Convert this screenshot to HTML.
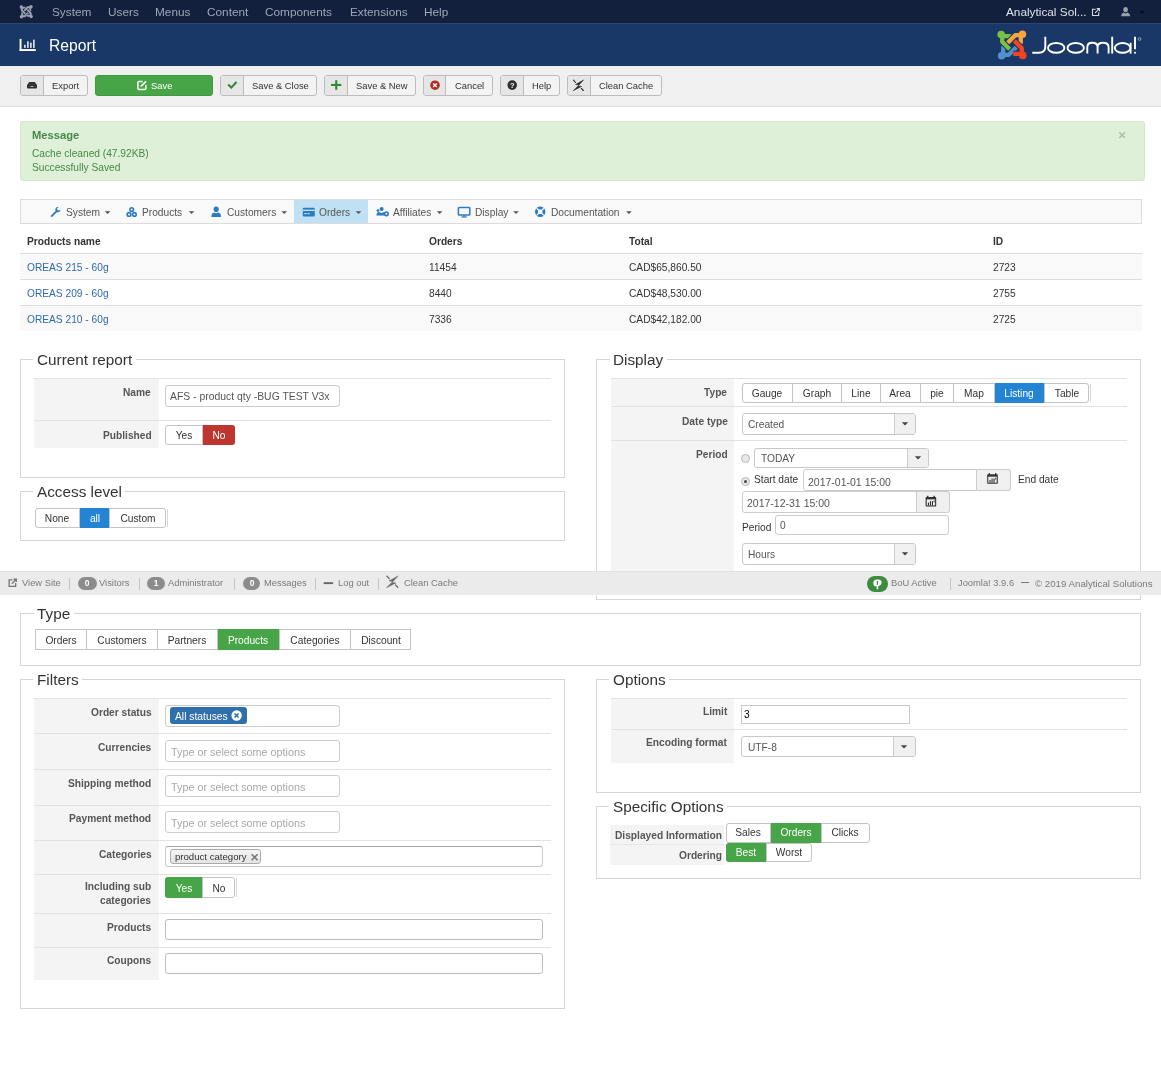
<!DOCTYPE html><html><head><meta charset="utf-8"><style>
*{box-sizing:border-box;margin:0;padding:0}
html,body{width:1161px;height:1080px;overflow:hidden;background:#fff}
body{position:relative;font-family:"Liberation Sans",sans-serif;font-size:10.2px;color:#333}
.a{position:absolute}
.t{position:absolute;white-space:nowrap;line-height:1.15;will-change:transform}
.b{font-weight:bold}
</style></head><body>
<div class="a" style="left:0px;top:0px;width:1161px;height:23px;background:#12203e"></div>
<div class="a" style="left:0px;top:23px;width:1161px;height:1px;background:#2b4672"></div>
<div class="t " style="left:51.7px;top:5.93px;font-size:11.8px;color:#9ea6b5">System</div>
<div class="t " style="left:107.7px;top:5.93px;font-size:11.8px;color:#9ea6b5">Users</div>
<div class="t " style="left:154.6px;top:5.93px;font-size:11.8px;color:#9ea6b5">Menus</div>
<div class="t " style="left:206.7px;top:5.93px;font-size:11.8px;color:#9ea6b5">Content</div>
<div class="t " style="left:265px;top:5.93px;font-size:11.8px;color:#9ea6b5">Components</div>
<div class="t " style="left:350px;top:5.93px;font-size:11.8px;color:#9ea6b5">Extensions</div>
<div class="t " style="left:424px;top:5.93px;font-size:11.8px;color:#9ea6b5">Help</div>
<div class="t " style="left:1006.2px;top:5.93px;font-size:11.8px;color:#dfe3ea">Analytical Sol...</div>
<div class="a" style="left:0px;top:24px;width:1161px;height:42px;background:#1a3867"></div>
<div class="t " style="left:49.4px;top:36.53px;font-size:15.7px;color:#fff">Report</div>
<div class="a" style="left:0px;top:66px;width:1161px;height:40px;background:#f0f0f0"></div>
<div class="a" style="left:0px;top:106px;width:1161px;height:1px;background:#dedede"></div>
<div class="a" style="left:20px;top:75px;width:68px;height:21px;border:1px solid #bcbcbc;border-radius:3px;background:#f3f3f3;overflow:hidden"><div class="a" style="left:0;top:0;bottom:0;width:22.5px;background:#e6e6e6;border-right:1px solid #bcbcbc"></div></div>
<div class="t " style="left:51.7px;top:80.84px;font-size:9.4px;color:#333">Export</div>
<div class="a" style="left:95px;top:75px;width:118px;height:21px;border:1px solid #3f9a3f;border-radius:3px;background:#47a447"></div>
<div class="t " style="left:150.7px;top:80.84px;font-size:9.4px;color:#fff">Save</div>
<div class="a" style="left:220px;top:75px;width:97px;height:21px;border:1px solid #bcbcbc;border-radius:3px;background:#f3f3f3;overflow:hidden"><div class="a" style="left:0;top:0;bottom:0;width:22.599999999999994px;background:#e6e6e6;border-right:1px solid #bcbcbc"></div></div>
<div class="t " style="left:251.7px;top:80.84px;font-size:9.4px;color:#333">Save &amp; Close</div>
<div class="a" style="left:324px;top:75px;width:92px;height:21px;border:1px solid #bcbcbc;border-radius:3px;background:#f3f3f3;overflow:hidden"><div class="a" style="left:0;top:0;bottom:0;width:22.600000000000023px;background:#e6e6e6;border-right:1px solid #bcbcbc"></div></div>
<div class="t " style="left:355.9px;top:80.84px;font-size:9.4px;color:#333">Save &amp; New</div>
<div class="a" style="left:423px;top:75px;width:70px;height:21px;border:1px solid #bcbcbc;border-radius:3px;background:#f3f3f3;overflow:hidden"><div class="a" style="left:0;top:0;bottom:0;width:22.399999999999977px;background:#e6e6e6;border-right:1px solid #bcbcbc"></div></div>
<div class="t " style="left:454.7px;top:80.84px;font-size:9.4px;color:#333">Cancel</div>
<div class="a" style="left:500px;top:75px;width:60px;height:21px;border:1px solid #bcbcbc;border-radius:3px;background:#f3f3f3;overflow:hidden"><div class="a" style="left:0;top:0;bottom:0;width:23px;background:#e6e6e6;border-right:1px solid #bcbcbc"></div></div>
<div class="t " style="left:531.5px;top:80.84px;font-size:9.4px;color:#333">Help</div>
<div class="a" style="left:567px;top:75px;width:94.5px;height:21px;border:1px solid #bcbcbc;border-radius:3px;background:#f3f3f3;overflow:hidden"><div class="a" style="left:0;top:0;bottom:0;width:22.700000000000045px;background:#e6e6e6;border-right:1px solid #bcbcbc"></div></div>
<div class="t " style="left:598.7px;top:80.84px;font-size:9.4px;color:#333">Clean Cache</div>
<div class="a" style="left:20px;top:121px;width:1125px;height:60px;background:#dff0d8;border:1px solid #d3e8c8;border-radius:3px"></div>
<div class="t " style="left:32.1px;top:129.08px;font-size:11.2px;color:#468847;font-weight:bold">Message</div>
<div class="t " style="left:32.1px;top:148.10px;font-size:10.2px;color:#468847">Cache cleaned (47.92KB)</div>
<div class="t " style="left:32.1px;top:161.90px;font-size:10.2px;color:#468847">Successfully Saved</div>
<div class="a" style="left:20px;top:199px;width:1122px;height:25px;background:#f9f9f9;border:1px solid #dcdcdc"></div>
<div class="a" style="left:294px;top:200px;width:74px;height:23px;background:#c0e0f3"></div>
<div class="t " style="left:65.5px;top:207.10px;font-size:10.2px;color:#555">System</div>
<div class="t " style="left:142.2px;top:207.10px;font-size:10.2px;color:#555">Products</div>
<div class="t " style="left:226.6px;top:207.10px;font-size:10.2px;color:#555">Customers</div>
<div class="t " style="left:319.3px;top:207.10px;font-size:10.2px;color:#555">Orders</div>
<div class="t " style="left:392.9px;top:207.10px;font-size:10.2px;color:#555">Affiliates</div>
<div class="t " style="left:474.5px;top:207.10px;font-size:10.2px;color:#555">Display</div>
<div class="t " style="left:551px;top:207.10px;font-size:10.2px;color:#555">Documentation</div>
<div class="a" style="left:20px;top:253px;width:1122px;height:1px;background:#ddd"></div>
<div class="a" style="left:20px;top:254px;width:1122px;height:25px;background:#f9f9f9"></div>
<div class="a" style="left:20px;top:279px;width:1122px;height:1px;background:#ddd"></div>
<div class="a" style="left:20px;top:305px;width:1122px;height:1px;background:#ddd"></div>
<div class="a" style="left:20px;top:306px;width:1122px;height:25px;background:#f9f9f9"></div>
<div class="t " style="left:26.5px;top:235.90px;font-size:10.2px;font-weight:bold">Products name</div>
<div class="t " style="left:428.9px;top:235.90px;font-size:10.2px;font-weight:bold">Orders</div>
<div class="t " style="left:628.5px;top:235.90px;font-size:10.2px;font-weight:bold">Total</div>
<div class="t " style="left:993px;top:235.90px;font-size:10.2px;font-weight:bold">ID</div>
<div class="t " style="left:26.5px;top:261.80px;font-size:10.2px;color:#2f6aac">OREAS 215 - 60g</div>
<div class="t " style="left:428.9px;top:261.80px;font-size:10.2px;">11454</div>
<div class="t " style="left:628.5px;top:261.80px;font-size:10.2px;">CAD$65,860.50</div>
<div class="t " style="left:993px;top:261.80px;font-size:10.2px;">2723</div>
<div class="t " style="left:26.5px;top:287.80px;font-size:10.2px;color:#2f6aac">OREAS 209 - 60g</div>
<div class="t " style="left:428.9px;top:287.80px;font-size:10.2px;">8440</div>
<div class="t " style="left:628.5px;top:287.80px;font-size:10.2px;">CAD$48,530.00</div>
<div class="t " style="left:993px;top:287.80px;font-size:10.2px;">2755</div>
<div class="t " style="left:26.5px;top:313.80px;font-size:10.2px;color:#2f6aac">OREAS 210 - 60g</div>
<div class="t " style="left:428.9px;top:313.80px;font-size:10.2px;">7336</div>
<div class="t " style="left:628.5px;top:313.80px;font-size:10.2px;">CAD$42,182.00</div>
<div class="t " style="left:993px;top:313.80px;font-size:10.2px;">2725</div>
<div class="a" style="left:20px;top:359px;width:545px;height:119px;border:1px solid #d5d5d5"></div>
<div class="a" style="left:33.4px;top:358px;width:102.22815625000001px;height:3px;background:#fff"></div>
<div class="t " style="left:36.9px;top:351.10px;font-size:15.3px;color:#333">Current report</div>
<div class="a" style="left:34px;top:378px;width:125px;height:70px;background:#f4f4f4"></div>
<div class="a" style="left:34px;top:378px;width:517px;height:1px;background:#e2e2e2"></div>
<div class="a" style="left:34px;top:420px;width:517px;height:1px;background:#e2e2e2"></div>
<div class="t" style="right:1009.8px;top:387.10px;font-size:10.2px;font-weight:bold;color:#555">Name</div>
<div class="t" style="right:1009.8px;top:429.50px;font-size:10.2px;font-weight:bold;color:#555">Published</div>
<div class="a" style="left:165px;top:385px;width:175px;height:22px;border:1px solid #ccc;border-radius:3px;background:#fff;"></div>
<div class="t " style="left:170px;top:391.12px;font-size:10.4px;color:#555">AFS - product qty -BUG TEST V3x</div>
<div class="a" style="left:165px;top:425px;width:70px;height:20px;border:1px solid #c4c4c4;border-radius:3px;background:#fff;overflow:hidden"></div>
<div class="t" style="left:83.6px;width:200px;text-align:center;top:429.50px;font-size:10.2px;color:#333">Yes</div>
<div class="a" style="left:202.2px;top:425px;width:32.80000000000001px;height:20px;background:#bd362f;border-radius:0 3px 3px 0"></div>
<div class="t" style="left:118.6px;width:200px;text-align:center;top:429.50px;font-size:10.2px;color:#fff">No</div>
<div class="a" style="left:201.7px;top:425px;width:1.0px;height:20px;background:#c4c4c4"></div>
<div class="a" style="left:20px;top:491px;width:545px;height:50px;border:1px solid #d5d5d5"></div>
<div class="a" style="left:33.4px;top:490px;width:92.02975px;height:3px;background:#fff"></div>
<div class="t " style="left:36.9px;top:482.80px;font-size:15.3px;color:#333">Access level</div>
<div class="a" style="left:35px;top:508px;width:130.5px;height:20px;border:1px solid #c4c4c4;border-radius:3px;background:#fff;overflow:hidden"></div>
<div class="t" style="left:-42.65px;width:200px;text-align:center;top:513.00px;font-size:10.2px;color:#333">None</div>
<div class="a" style="left:79.7px;top:508px;width:30.099999999999994px;height:20px;background:#2384d3"></div>
<div class="t" style="left:-5.25px;width:200px;text-align:center;top:513.00px;font-size:10.2px;color:#fff">all</div>
<div class="a" style="left:79.2px;top:508px;width:1.0px;height:20px;background:#c4c4c4"></div>
<div class="t" style="left:37.650000000000006px;width:200px;text-align:center;top:513.00px;font-size:10.2px;color:#333">Custom</div>
<div class="a" style="left:109.3px;top:508px;width:1.0px;height:20px;background:#c4c4c4"></div>
<div class="a" style="left:166.5px;top:509px;width:1.0px;height:18px;background:#d8d8d8"></div>
<div class="a" style="left:596px;top:359px;width:545px;height:241px;border:1px solid #d5d5d5"></div>
<div class="a" style="left:609.7px;top:358px;width:57.16487500000005px;height:3px;background:#fff"></div>
<div class="t " style="left:613.2px;top:351.10px;font-size:15.3px;color:#333">Display</div>
<div class="a" style="left:611px;top:378px;width:123.29999999999995px;height:212px;background:#f4f4f4"></div>
<div class="a" style="left:611px;top:378px;width:516px;height:1px;background:#e2e2e2"></div>
<div class="a" style="left:611px;top:406px;width:516px;height:1px;background:#e2e2e2"></div>
<div class="a" style="left:611px;top:440px;width:516px;height:1px;background:#e2e2e2"></div>
<div class="t" style="right:433.5px;top:386.90px;font-size:10.2px;font-weight:bold;color:#555">Type</div>
<div class="t" style="right:433.5px;top:415.50px;font-size:10.2px;font-weight:bold;color:#555">Date type</div>
<div class="t" style="right:433.5px;top:449.00px;font-size:10.2px;font-weight:bold;color:#555">Period</div>
<div class="a" style="left:742px;top:383px;width:346.5px;height:20px;border:1px solid #c4c4c4;border-radius:3px;background:#fff;overflow:hidden"></div>
<div class="t" style="left:667.3px;width:200px;text-align:center;top:388.00px;font-size:10.2px;color:#333">Gauge</div>
<div class="t" style="left:716.85px;width:200px;text-align:center;top:388.00px;font-size:10.2px;color:#333">Graph</div>
<div class="a" style="left:792.1px;top:383px;width:1.0px;height:20px;background:#c4c4c4"></div>
<div class="t" style="left:760.6px;width:200px;text-align:center;top:388.00px;font-size:10.2px;color:#333">Line</div>
<div class="a" style="left:840.6px;top:383px;width:1.0px;height:20px;background:#c4c4c4"></div>
<div class="t" style="left:800.4000000000001px;width:200px;text-align:center;top:388.00px;font-size:10.2px;color:#333">Area</div>
<div class="a" style="left:879.6px;top:383px;width:1.0px;height:20px;background:#c4c4c4"></div>
<div class="t" style="left:837.1500000000001px;width:200px;text-align:center;top:388.00px;font-size:10.2px;color:#333">pie</div>
<div class="a" style="left:920.2px;top:383px;width:1.0px;height:20px;background:#c4c4c4"></div>
<div class="t" style="left:873.85px;width:200px;text-align:center;top:388.00px;font-size:10.2px;color:#333">Map</div>
<div class="a" style="left:953.1px;top:383px;width:1.0px;height:20px;background:#c4c4c4"></div>
<div class="a" style="left:994.1px;top:383px;width:50.69999999999993px;height:20px;background:#2384d3"></div>
<div class="t" style="left:919.45px;width:200px;text-align:center;top:388.00px;font-size:10.2px;color:#fff">Listing</div>
<div class="a" style="left:993.6px;top:383px;width:1.0px;height:20px;background:#c4c4c4"></div>
<div class="t" style="left:966.6500000000001px;width:200px;text-align:center;top:388.00px;font-size:10.2px;color:#333">Table</div>
<div class="a" style="left:1044.3px;top:383px;width:1.0px;height:20px;background:#c4c4c4"></div>
<div class="a" style="left:1089.5px;top:384px;width:1.0px;height:18px;background:#d8d8d8"></div>
<div class="a" style="left:742px;top:413px;width:173.5px;height:22px;border:1px solid #c8c8c8;border-radius:3px;background:#fff;overflow:hidden"><div class="a" style="left:150.5px;top:0;right:0;bottom:0;background:#f0f0f0;border-left:1px solid #ccc"></div></div>
<svg class="a" style="left:900.5px;top:421.0px" width="8" height="6"><path d="M0.8 1.2 H7.2 L4 4.6 Z" fill="#444"/></svg>
<div class="t " style="left:748px;top:419.00px;font-size:10.2px;color:#555">Created</div>
<div class="a" style="left:741px;top:454px;width:9px;height:9px;border:1px solid #b5b5b5;border-radius:50%;background:#e8e8e8"></div>
<div class="a" style="left:754px;top:448px;width:174.5px;height:20px;border:1px solid #c8c8c8;border-radius:3px;background:#fff;overflow:hidden"><div class="a" style="left:151.60000000000002px;top:0;right:0;bottom:0;background:#f0f0f0;border-left:1px solid #ccc"></div></div>
<svg class="a" style="left:913.55px;top:455.0px" width="8" height="6"><path d="M0.8 1.2 H7.2 L4 4.6 Z" fill="#444"/></svg>
<div class="t " style="left:761px;top:453.20px;font-size:10.2px;color:#555">TODAY</div>
<div class="a" style="left:741px;top:476.5px;width:9px;height:9px;border:1px solid #b5b5b5;border-radius:50%;background:#e8e8e8"><div class="a" style="left:2px;top:2px;width:3px;height:3px;border-radius:50%;background:#444"></div></div>
<div class="t " style="left:754px;top:474.30px;font-size:10.2px;color:#333">Start date</div>
<div class="a" style="left:802.6px;top:469px;width:208.10000000000002px;height:21.5px;border:1px solid #ccc;border-radius:3px;background:#fff;"></div>
<div class="a" style="left:976.4px;top:469px;width:34.30000000000007px;height:21.5px;background:#f0f0f0;border:1px solid #ccc;border-radius:0 3px 3px 0"></div>
<div class="t " style="left:807.8px;top:475.62px;font-size:10.5px;color:#555">2017-01-01 15:00</div>
<div class="t " style="left:1018px;top:474.30px;font-size:10.2px;color:#333">End date</div>
<div class="a" style="left:741.6px;top:491.2px;width:208.0px;height:21.80000000000001px;border:1px solid #ccc;border-radius:3px;background:#fff;"></div>
<div class="a" style="left:915.5px;top:491.2px;width:34.10000000000002px;height:21.80000000000001px;background:#f0f0f0;border:1px solid #ccc;border-radius:0 3px 3px 0"></div>
<div class="t " style="left:746.8px;top:497.32px;font-size:10.5px;color:#555">2017-12-31 15:00</div>
<div class="t " style="left:741.6px;top:522.40px;font-size:10.2px;color:#333">Period</div>
<div class="a" style="left:774.7px;top:514.6px;width:174.79999999999995px;height:20.899999999999977px;border:1px solid #ccc;border-radius:3px;background:#fff;"></div>
<div class="t " style="left:780px;top:520.30px;font-size:10.2px;color:#555">0</div>
<div class="a" style="left:741.6px;top:542.5px;width:174.89999999999998px;height:22.100000000000023px;border:1px solid #c8c8c8;border-radius:3px;background:#fff;overflow:hidden"><div class="a" style="left:151.39999999999998px;top:0;right:0;bottom:0;background:#f0f0f0;border-left:1px solid #ccc"></div></div>
<svg class="a" style="left:901.25px;top:550.55px" width="8" height="6"><path d="M0.8 1.2 H7.2 L4 4.6 Z" fill="#444"/></svg>
<div class="t " style="left:748px;top:549.30px;font-size:10.2px;color:#555">Hours</div>
<div class="a" style="left:0px;top:571px;width:1161px;height:24px;background:#ebebeb;border-top:1px solid #e2e2e2"></div>
<div class="t " style="left:21.5px;top:578.08px;font-size:9.35px;color:#7a7a7a">View Site</div>
<div class="a" style="left:69px;top:577.8px;width:1px;height:12.0px;background:#c4c4c4"></div>
<div class="a" style="left:77.5px;top:576.5px;width:19.299999999999997px;height:13.3px;border-radius:7px;background:#8c8c8c"></div>
<div class="t" style="left:-12.849999999999994px;width:200px;text-align:center;top:579.07px;font-size:8.5px;color:#fff;font-weight:bold">0</div>
<div class="t " style="left:99px;top:578.08px;font-size:9.35px;color:#7a7a7a">Visitors</div>
<div class="a" style="left:138.5px;top:577.8px;width:1.0px;height:12.0px;background:#c4c4c4"></div>
<div class="a" style="left:147.3px;top:576.5px;width:18.099999999999994px;height:13.3px;border-radius:7px;background:#8c8c8c"></div>
<div class="t" style="left:56.35000000000002px;width:200px;text-align:center;top:579.07px;font-size:8.5px;color:#fff;font-weight:bold">1</div>
<div class="t " style="left:168px;top:578.08px;font-size:9.35px;color:#7a7a7a">Administrator</div>
<div class="a" style="left:233.5px;top:577.8px;width:1.0px;height:12.0px;background:#c4c4c4"></div>
<div class="a" style="left:242.7px;top:576.5px;width:17.600000000000023px;height:13.3px;border-radius:7px;background:#8c8c8c"></div>
<div class="t" style="left:151.5px;width:200px;text-align:center;top:579.07px;font-size:8.5px;color:#fff;font-weight:bold">0</div>
<div class="t " style="left:263.9px;top:578.08px;font-size:9.35px;color:#7a7a7a">Messages</div>
<div class="a" style="left:315px;top:577.8px;width:1px;height:12.0px;background:#c4c4c4"></div>
<div class="t " style="left:337.5px;top:578.08px;font-size:9.35px;color:#7a7a7a">Log out</div>
<div class="a" style="left:377.5px;top:577.8px;width:1.0px;height:12.0px;background:#c4c4c4"></div>
<div class="t " style="left:403.8px;top:578.08px;font-size:9.35px;color:#7a7a7a">Clean Cache</div>
<div class="a" style="left:867.4px;top:576px;width:20.6px;height:15.6px;border-radius:8px;background:#3d8b3d"></div>
<div class="t " style="left:890.7px;top:578.08px;font-size:9.35px;color:#7a7a7a">BoU Active</div>
<div class="a" style="left:949.5px;top:577.8px;width:1.0px;height:12.0px;background:#c4c4c4"></div>
<div class="t " style="left:958px;top:578.08px;font-size:9.35px;color:#7a7a7a">Joomla! 3.9.6</div>
<div class="a" style="left:1021.4px;top:582.3px;width:7.300000000000068px;height:1.0px;background:#7a7a7a"></div>
<div class="t " style="left:1035.4px;top:577.76px;font-size:9.7px;color:#7a7a7a">&copy; 2019 Analytical Solutions</div>
<div class="a" style="left:20px;top:613px;width:1121px;height:53px;border:1px solid #d5d5d5"></div>
<div class="a" style="left:33.6px;top:612px;width:40.16753125px;height:3px;background:#fff"></div>
<div class="t " style="left:37.1px;top:604.90px;font-size:15.3px;color:#333">Type</div>
<div class="a" style="left:35px;top:629px;width:376px;height:21px;border:1px solid #c4c4c4;background:#fff"></div>
<div class="t" style="left:-39.349999999999994px;width:200px;text-align:center;top:635.10px;font-size:10.2px;color:#333">Orders</div>
<div class="t" style="left:22.150000000000006px;width:200px;text-align:center;top:635.10px;font-size:10.2px;color:#333">Customers</div>
<div class="a" style="left:86.2px;top:629px;width:1.0px;height:21px;background:#c4c4c4"></div>
<div class="t" style="left:87.30000000000001px;width:200px;text-align:center;top:635.10px;font-size:10.2px;color:#333">Partners</div>
<div class="a" style="left:157.1px;top:629px;width:1.0px;height:21px;background:#c4c4c4"></div>
<div class="a" style="left:217px;top:629px;width:62.5px;height:21px;background:#47a447"></div>
<div class="t" style="left:148.25px;width:200px;text-align:center;top:635.10px;font-size:10.2px;color:#fff">Products</div>
<div class="a" style="left:216.5px;top:629px;width:1.0px;height:21px;background:#c4c4c4"></div>
<div class="t" style="left:214.75px;width:200px;text-align:center;top:635.10px;font-size:10.2px;color:#333">Categories</div>
<div class="a" style="left:279.0px;top:629px;width:1.0px;height:21px;background:#c4c4c4"></div>
<div class="t" style="left:280.5px;width:200px;text-align:center;top:635.10px;font-size:10.2px;color:#333">Discount</div>
<div class="a" style="left:349.5px;top:629px;width:1.0px;height:21px;background:#c4c4c4"></div>
<div class="a" style="left:20px;top:679px;width:545px;height:330px;border:1px solid #d5d5d5"></div>
<div class="a" style="left:33.4px;top:678px;width:48.647078125px;height:3px;background:#fff"></div>
<div class="t " style="left:36.9px;top:671.30px;font-size:15.3px;color:#333">Filters</div>
<div class="a" style="left:34px;top:698px;width:125px;height:282px;background:#f4f4f4"></div>
<div class="a" style="left:34px;top:698.2px;width:517px;height:1.0px;background:#e2e2e2"></div>
<div class="a" style="left:34px;top:732.8px;width:517px;height:1.0px;background:#e2e2e2"></div>
<div class="a" style="left:34px;top:768.9px;width:517px;height:1.0px;background:#e2e2e2"></div>
<div class="a" style="left:34px;top:804.5px;width:517px;height:1.0px;background:#e2e2e2"></div>
<div class="a" style="left:34px;top:840.2px;width:517px;height:1.0px;background:#e2e2e2"></div>
<div class="a" style="left:34px;top:873.7px;width:517px;height:1.0px;background:#e2e2e2"></div>
<div class="a" style="left:34px;top:913.2px;width:517px;height:1.0px;background:#e2e2e2"></div>
<div class="a" style="left:34px;top:946.5px;width:517px;height:1.0px;background:#e2e2e2"></div>
<div class="t" style="right:1009.8px;top:707.00px;font-size:10.2px;font-weight:bold;color:#555">Order status</div>
<div class="t" style="right:1009.8px;top:741.60px;font-size:10.2px;font-weight:bold;color:#555">Currencies</div>
<div class="t" style="right:1009.8px;top:777.70px;font-size:10.2px;font-weight:bold;color:#555">Shipping method</div>
<div class="t" style="right:1009.8px;top:813.30px;font-size:10.2px;font-weight:bold;color:#555">Payment method</div>
<div class="t" style="right:1009.8px;top:849.00px;font-size:10.2px;font-weight:bold;color:#555">Categories</div>
<div class="t" style="right:1009.8px;top:881.20px;font-size:10.2px;font-weight:bold;color:#555">Including sub</div>
<div class="t" style="right:1009.8px;top:922.00px;font-size:10.2px;font-weight:bold;color:#555">Products</div>
<div class="t" style="right:1009.8px;top:955.30px;font-size:10.2px;font-weight:bold;color:#555">Coupons</div>
<div class="t" style="right:1009.8px;top:895.20px;font-size:10.2px;font-weight:bold;color:#555">categories</div>
<div class="a" style="left:165.4px;top:704.6px;width:174.29999999999998px;height:22.699999999999932px;border:1px solid #ccc;border-radius:3px;background:#fff;"></div>
<div class="a" style="left:170.1px;top:707.4px;width:77.1px;height:16.300000000000068px;background:#2f6fab;border-radius:3px"></div>
<div class="t " style="left:175.2px;top:711.21px;font-size:10.3px;color:#fff">All statuses</div>
<div class="a" style="left:165.4px;top:740.2px;width:174.29999999999998px;height:22.200000000000045px;border:1px solid #ccc;border-radius:3px;background:#fff;"></div>
<div class="t " style="left:170.5px;top:746.15px;font-size:10.8px;color:#a8a8a8">Type or select some options</div>
<div class="a" style="left:165.4px;top:775.3px;width:174.29999999999998px;height:22.200000000000045px;border:1px solid #ccc;border-radius:3px;background:#fff;"></div>
<div class="t " style="left:170.5px;top:781.25px;font-size:10.8px;color:#a8a8a8">Type or select some options</div>
<div class="a" style="left:165.4px;top:811.3px;width:174.29999999999998px;height:22.200000000000045px;border:1px solid #ccc;border-radius:3px;background:#fff;"></div>
<div class="t " style="left:170.5px;top:817.25px;font-size:10.8px;color:#a8a8a8">Type or select some options</div>
<div class="a" style="left:165.4px;top:846.2px;width:378.1px;height:20.799999999999955px;border:1px solid #ccc;border-radius:3px;background:#fff;border-top-color:#aaa"></div>
<div class="a" style="left:170.1px;top:848.5px;width:91.4px;height:15.2px;border:1px solid #aaa;border-radius:3px;background:linear-gradient(#f4f4f4,#e4e4e4)"></div>
<div class="t " style="left:174.7px;top:851.45px;font-size:9.6px;color:#333">product category</div>
<div class="a" style="left:165px;top:877.4px;width:70px;height:20.300000000000068px;border:1px solid #c4c4c4;border-radius:3px;background:#fff;overflow:hidden"></div>
<div class="a" style="left:165px;top:877.4px;width:37.69999999999999px;height:20.300000000000068px;background:#47a447;border-radius:3px 0 0 3px"></div>
<div class="t" style="left:83.85px;width:200px;text-align:center;top:882.80px;font-size:10.2px;color:#fff">Yes</div>
<div class="t" style="left:118.85px;width:200px;text-align:center;top:882.80px;font-size:10.2px;color:#333">No</div>
<div class="a" style="left:202.2px;top:877.4px;width:1.0px;height:20.300000000000068px;background:#c4c4c4"></div>
<div class="a" style="left:236px;top:878.4px;width:1px;height:18.300000000000068px;background:#d8d8d8"></div>
<div class="a" style="left:165.4px;top:919.2px;width:378.1px;height:21.09999999999991px;border:1px solid #ccc;border-radius:3px;background:#fff;border-color:#bbb"></div>
<div class="a" style="left:165.4px;top:953.1px;width:378.1px;height:20.699999999999932px;border:1px solid #ccc;border-radius:3px;background:#fff;border-color:#bbb"></div>
<div class="a" style="left:596px;top:679px;width:545px;height:114px;border:1px solid #d5d5d5"></div>
<div class="a" style="left:609.4px;top:678px;width:59.725234375000014px;height:3px;background:#fff"></div>
<div class="t " style="left:612.9px;top:671.30px;font-size:15.3px;color:#333">Options</div>
<div class="a" style="left:610.5px;top:698.1px;width:123.89999999999998px;height:65.29999999999995px;background:#f4f4f4"></div>
<div class="a" style="left:610.5px;top:698.1px;width:516.5px;height:1.0px;background:#e2e2e2"></div>
<div class="a" style="left:610.5px;top:729.4px;width:516.5px;height:1.0px;background:#e2e2e2"></div>
<div class="t" style="right:433.79999999999995px;top:705.50px;font-size:10.2px;font-weight:bold;color:#555">Limit</div>
<div class="t" style="right:433.79999999999995px;top:737.00px;font-size:10.2px;font-weight:bold;color:#555">Encoding format</div>
<div class="a" style="left:740.8px;top:704.5px;width:169px;height:19.1px;border:1px solid #c8c8c8;background:#fff"></div>
<div class="t " style="left:744px;top:709.30px;font-size:10.2px;color:#000">3</div>
<div class="a" style="left:740.8px;top:736.1px;width:174.80000000000007px;height:21.399999999999977px;border:1px solid #c8c8c8;border-radius:3px;background:#fff;overflow:hidden"><div class="a" style="left:151.30000000000007px;top:0;right:0;bottom:0;background:#f0f0f0;border-left:1px solid #ccc"></div></div>
<svg class="a" style="left:900.35px;top:743.8px" width="8" height="6"><path d="M0.8 1.2 H7.2 L4 4.6 Z" fill="#444"/></svg>
<div class="t " style="left:748px;top:741.50px;font-size:10.2px;color:#555">UTF-8</div>
<div class="a" style="left:596px;top:806px;width:545px;height:73px;border:1px solid #d5d5d5"></div>
<div class="a" style="left:609.4px;top:805px;width:117.54728124999997px;height:3px;background:#fff"></div>
<div class="t " style="left:612.9px;top:798.30px;font-size:15.3px;color:#333">Specific Options</div>
<div class="a" style="left:610.4px;top:825px;width:113.80000000000007px;height:39.799999999999955px;background:#f4f4f4"></div>
<div class="a" style="left:610.4px;top:844.2px;width:113.80000000000007px;height:1.0px;background:#e6e6e6"></div>
<div class="t" style="right:439.20000000000005px;top:829.60px;font-size:10.2px;font-weight:bold;color:#555">Displayed Information</div>
<div class="t" style="right:439.20000000000005px;top:849.70px;font-size:10.2px;font-weight:bold;color:#555">Ordering</div>
<div class="a" style="left:725.9px;top:822.5px;width:143.80000000000007px;height:20.100000000000023px;border:1px solid #c4c4c4;border-radius:3px;background:#fff;overflow:hidden"></div>
<div class="t" style="left:647.95px;width:200px;text-align:center;top:827.30px;font-size:10.2px;color:#333">Sales</div>
<div class="a" style="left:770px;top:822.5px;width:51.200000000000045px;height:20.100000000000023px;background:#47a447"></div>
<div class="t" style="left:695.6px;width:200px;text-align:center;top:827.30px;font-size:10.2px;color:#fff">Orders</div>
<div class="a" style="left:769.5px;top:822.5px;width:1.0px;height:20.100000000000023px;background:#c4c4c4"></div>
<div class="t" style="left:745.45px;width:200px;text-align:center;top:827.30px;font-size:10.2px;color:#333">Clicks</div>
<div class="a" style="left:820.7px;top:822.5px;width:1.0px;height:20.100000000000023px;background:#c4c4c4"></div>
<div class="a" style="left:725.9px;top:842.6px;width:85.89999999999998px;height:19.399999999999977px;border:1px solid #c4c4c4;border-radius:3px;background:#fff;overflow:hidden"></div>
<div class="a" style="left:725.9px;top:842.6px;width:40.10000000000002px;height:19.399999999999977px;background:#47a447;border-radius:3px 0 0 3px"></div>
<div class="t" style="left:645.95px;width:200px;text-align:center;top:847.10px;font-size:10.2px;color:#fff">Best</div>
<div class="t" style="left:688.9px;width:200px;text-align:center;top:847.10px;font-size:10.2px;color:#333">Worst</div>
<div class="a" style="left:765.5px;top:842.6px;width:1.0px;height:19.399999999999977px;background:#c4c4c4"></div>
<svg class="a" style="left:0;top:0" width="1161" height="1080"><g fill="#fff"><rect x="19.6" y="38.9" width="1.9" height="12.1"/><rect x="19.6" y="49.1" width="16.2" height="1.9"/><rect x="24.2" y="44.8" width="1.4" height="3.1"/><rect x="27.2" y="41.3" width="1.4" height="6.6"/><rect x="30.2" y="42.6" width="1.4" height="5.3"/><rect x="33.2" y="39.6" width="1.4" height="8.3"/></g><path d="M29.2 82 H34.8 L37 85 V87.7 Q37 88.5 36.2 88.5 H27.8 Q27 88.5 27 87.7 V85 Z" fill="#333"/><rect x="30.6" y="86.1" width="2.8" height="0.8" fill="#ddd"/><path d="M142.5 81.4 H139 Q137.9 81.4 137.9 82.5 V88.3 Q137.9 89.4 139 89.4 H144.8 Q145.9 89.4 145.9 88.3 V85" fill="none" stroke="#fff" stroke-width="1.5"/><path d="M140.3 87 L140.8 85.2 L145.3 80.7 L146.6 82 L142.1 86.5 Z" fill="#fff"/><path d="M228.2 84.6 L231.3 87.6 L236.5 82" fill="none" stroke="#378337" stroke-width="2.1"/><g fill="#2e8b2e"><rect x="335.2" y="80.2" width="2.1" height="9.6"/><rect x="331.1" y="83.9" width="10.2" height="2.1"/></g><circle cx="435" cy="85.2" r="4.8" fill="#b52b27"/><path d="M433.2 83.4 L436.8 87 M436.8 83.4 L433.2 87" stroke="#fff" stroke-width="1.4"/><circle cx="512.2" cy="85.1" r="4.8" fill="#2d2d2d"/><text x="512.2" y="88.2" font-size="7.5" font-weight="bold" text-anchor="middle" fill="#fff" font-family="Liberation Sans">?</text><g transform="translate(573.2,79.9) scale(1.0,1.0)"><path d="M10.4 0 L2.3 4.6 L5.8 5.1 L0 10.8 L8.4 6.5 L5 6 Z" fill="#2b2b2b" stroke="#2b2b2b" stroke-width="0.5" stroke-linejoin="round"/><path d="M0.3 0.3 L2.4 2.6 M8.1 8.4 L10.2 10.6" stroke="#2b2b2b" stroke-width="1.1" stroke-linecap="round"/></g><g transform="translate(1091.7,8) scale(1.0)" fill="none" stroke="#d5d9e0" stroke-width="1.10"><path d="M4 1.3 H0.8 V7.5 H7 V4.3"/><path d="M3.4 4.9 L7.6 0.7 M5 0.6 H7.7 V3.3"/></g><g fill="#9aa1ae"><ellipse cx="1125.6" cy="9.6" rx="2.3" ry="2.7"/><path d="M1121 16.2 Q1121.3 13.3 1123.6 12.6 L1125.6 13.4 L1127.6 12.6 Q1129.9 13.3 1130.2 16.2 Z"/></g><path d="M1139.2 10.8 H1144.8 L1142 14 Z" fill="#08101f"/><g transform="translate(994 28)"><g transform="rotate(270 18 17)"><path d="M16.8 8.2 L9.5 8.2 Q8.2 8.2 8.2 9.5 L8.2 13.8 L15.7 21.3" stroke="#1a3867" stroke-width="6" fill="none" stroke-linecap="butt"/><path d="M16.8 8.2 L9.5 8.2 Q8.2 8.2 8.2 9.5 L8.2 13.8 L15.7 21.3" stroke="#5091cd" stroke-width="4.3" fill="none" stroke-linecap="butt" stroke-linejoin="round"/><circle cx="7.2" cy="6.6" r="3.8" fill="#5091cd"/></g><g transform="rotate(0 18 17)"><path d="M16.8 8.2 L9.5 8.2 Q8.2 8.2 8.2 9.5 L8.2 13.8 L15.7 21.3" stroke="#1a3867" stroke-width="6" fill="none" stroke-linecap="butt"/><path d="M16.8 8.2 L9.5 8.2 Q8.2 8.2 8.2 9.5 L8.2 13.8 L15.7 21.3" stroke="#7ac143" stroke-width="4.3" fill="none" stroke-linecap="butt" stroke-linejoin="round"/><circle cx="7.2" cy="6.6" r="3.8" fill="#7ac143"/></g><g transform="rotate(90 18 17)"><path d="M16.8 8.2 L9.5 8.2 Q8.2 8.2 8.2 9.5 L8.2 13.8 L15.7 21.3" stroke="#1a3867" stroke-width="6" fill="none" stroke-linecap="butt"/><path d="M16.8 8.2 L9.5 8.2 Q8.2 8.2 8.2 9.5 L8.2 13.8 L15.7 21.3" stroke="#f9a541" stroke-width="4.3" fill="none" stroke-linecap="butt" stroke-linejoin="round"/><circle cx="7.2" cy="6.6" r="3.8" fill="#f9a541"/></g><g transform="rotate(180 18 17)"><path d="M16.8 8.2 L9.5 8.2 Q8.2 8.2 8.2 9.5 L8.2 13.8 L15.7 21.3" stroke="#1a3867" stroke-width="6" fill="none" stroke-linecap="butt"/><path d="M16.8 8.2 L9.5 8.2 Q8.2 8.2 8.2 9.5 L8.2 13.8 L15.7 21.3" stroke="#f44321" stroke-width="4.3" fill="none" stroke-linecap="butt" stroke-linejoin="round"/><circle cx="7.2" cy="6.6" r="3.8" fill="#f44321"/></g></g><g transform="translate(18.05 4.03) scale(0.455)"><g transform="rotate(270 18 17)"><path d="M16.8 8.2 L9.5 8.2 Q8.2 8.2 8.2 9.5 L8.2 13.8 L15.7 21.3" stroke="#12203e" stroke-width="6" fill="none" stroke-linecap="butt"/><path d="M16.8 8.2 L9.5 8.2 Q8.2 8.2 8.2 9.5 L8.2 13.8 L15.7 21.3" stroke="#9aa1b0" stroke-width="4.3" fill="none" stroke-linecap="butt" stroke-linejoin="round"/><circle cx="7.2" cy="6.6" r="3.8" fill="#9aa1b0"/></g><g transform="rotate(0 18 17)"><path d="M16.8 8.2 L9.5 8.2 Q8.2 8.2 8.2 9.5 L8.2 13.8 L15.7 21.3" stroke="#12203e" stroke-width="6" fill="none" stroke-linecap="butt"/><path d="M16.8 8.2 L9.5 8.2 Q8.2 8.2 8.2 9.5 L8.2 13.8 L15.7 21.3" stroke="#9aa1b0" stroke-width="4.3" fill="none" stroke-linecap="butt" stroke-linejoin="round"/><circle cx="7.2" cy="6.6" r="3.8" fill="#9aa1b0"/></g><g transform="rotate(90 18 17)"><path d="M16.8 8.2 L9.5 8.2 Q8.2 8.2 8.2 9.5 L8.2 13.8 L15.7 21.3" stroke="#12203e" stroke-width="6" fill="none" stroke-linecap="butt"/><path d="M16.8 8.2 L9.5 8.2 Q8.2 8.2 8.2 9.5 L8.2 13.8 L15.7 21.3" stroke="#9aa1b0" stroke-width="4.3" fill="none" stroke-linecap="butt" stroke-linejoin="round"/><circle cx="7.2" cy="6.6" r="3.8" fill="#9aa1b0"/></g><g transform="rotate(180 18 17)"><path d="M16.8 8.2 L9.5 8.2 Q8.2 8.2 8.2 9.5 L8.2 13.8 L15.7 21.3" stroke="#12203e" stroke-width="6" fill="none" stroke-linecap="butt"/><path d="M16.8 8.2 L9.5 8.2 Q8.2 8.2 8.2 9.5 L8.2 13.8 L15.7 21.3" stroke="#9aa1b0" stroke-width="4.3" fill="none" stroke-linecap="butt" stroke-linejoin="round"/><circle cx="7.2" cy="6.6" r="3.8" fill="#9aa1b0"/></g></g><g fill="none" stroke="#fff" stroke-width="1.9"><path d="M1045.3 36.7 V46.5 Q1045.3 52.7 1038.5 52.7 H1032.3"/><ellipse cx="1056.2" cy="47.9" rx="8.2" ry="4.9"/><ellipse cx="1075.7" cy="47.9" rx="8.2" ry="4.9"/><path d="M1087.3 53.6 V47.3 Q1087.3 42.8 1092.2 42.8 Q1097.6 42.8 1097.6 47.3 V53.6 M1097.6 47.3 Q1097.6 42.8 1102.9 42.8 Q1108.6 42.8 1108.6 47.3 V53.6"/><path d="M1112.2 36.7 V53.6"/><ellipse cx="1122.6" cy="47.9" rx="7.8" ry="4.9"/><path d="M1130.6 42.8 V53.6"/><path d="M1135 36.7 V49.3"/></g><rect x="1134.1" y="51.8" width="1.8" height="1.8" fill="#fff"/><circle cx="1139.5" cy="39" r="1.4" fill="none" stroke="#fff" stroke-width="0.5"/><path d="M1119.3 132.3 L1125 138 M1125 132.3 L1119.3 138" stroke="#a9bfa5" stroke-width="1.4"/><path d="M50.5 216 L55.6 210.9 Q54.6 207.8 57.4 206.9 L58.6 206.9 L57 208.6 L57.6 210.2 L59.2 210.6 L60.4 209.3 Q60.6 212.8 56.9 212.2 L51.8 217.3 Z" fill="#2b7bc4"/><g fill="#2b7bc4"><circle cx="131.7" cy="209.6" r="2.6"/><circle cx="129" cy="214.4" r="2.6"/><circle cx="134.4" cy="214.4" r="2.6"/></g><g fill="#f9f9f9"><circle cx="131.7" cy="209.6" r="1"/><circle cx="129" cy="214.4" r="1"/><circle cx="134.4" cy="214.4" r="1"/></g><g fill="#2b7bc4"><ellipse cx="216.2" cy="209.3" rx="2.6" ry="2.8"/><path d="M211.4 217 Q211.4 212.7 214.2 212.4 L216.2 213.2 L218.2 212.4 Q221 212.7 221 217 Z"/></g><g><rect x="302.8" y="207.8" width="12" height="8.6" rx="1" fill="#2b7bc4"/><rect x="302.8" y="209.6" width="12" height="1.4" fill="#c0e0f3"/><rect x="304.3" y="213" width="2.5" height="1.2" fill="#c0e0f3"/><rect x="307.5" y="213" width="2" height="1.2" fill="#c0e0f3"/></g><g fill="#2b7bc4"><circle cx="381.6" cy="209" r="2"/><circle cx="378" cy="210.6" r="1.4"/><path d="M376.4 215.6 Q376.6 212.3 379 212 L381.6 213 L384.2 212 Q385 212.3 385.2 213.5 L385.2 215.6 Z"/><circle cx="386.4" cy="213.8" r="2.6"/></g><circle cx="386.4" cy="213.8" r="1" fill="#f9f9f9"/><g fill="none" stroke="#2b7bc4" stroke-width="1.5"><rect x="458.4" y="207.4" width="11.4" height="7.6" rx="0.8"/></g><rect x="461.5" y="216.3" width="5.2" height="1.3" fill="#2b7bc4"/><rect x="463.4" y="215" width="1.3" height="1.5" fill="#2b7bc4"/><circle cx="540.2" cy="211.8" r="5.2" fill="#2b7bc4"/><circle cx="540.2" cy="211.8" r="2.2" fill="#f9f9f9"/><path d="M536.6 208.2 L543.8 215.4 M543.8 208.2 L536.6 215.4" stroke="#f9f9f9" stroke-width="1.3"/><circle cx="540.2" cy="211.8" r="2.2" fill="#f9f9f9"/><path d="M104.8 211.2 H110.39999999999999 L107.6 214 Z" fill="#555"/><path d="M188.7 211.2 H194.3 L191.5 214 Z" fill="#555"/><path d="M281.4 211.2 H287.0 L284.2 214 Z" fill="#555"/><path d="M355.7 211.2 H361.3 L358.5 214 Z" fill="#555"/><path d="M436.8 211.2 H442.40000000000003 L439.6 214 Z" fill="#555"/><path d="M513.2 211.2 H518.8 L516 214 Z" fill="#555"/><path d="M626.1 211.2 H631.6999999999999 L628.9 214 Z" fill="#555"/><circle cx="236.6" cy="715.5" r="5.2" fill="#fff"/><path d="M234.6 713.5 L238.6 717.5 M238.6 713.5 L234.6 717.5" stroke="#2f6fab" stroke-width="1.6"/><path d="M251.6 854.3 L257.6 860.3 M257.6 854.3 L251.6 860.3" stroke="#777" stroke-width="1.6"/><g transform="translate(987.2,473.1)"><rect x="0" y="1.1" width="10.6" height="9.6" rx="0.8" fill="#333"/><rect x="1.1" y="3.6" width="8.4" height="6" fill="#f0f0f0"/><rect x="1.4" y="0" width="1.4" height="1.8" fill="#333"/><rect x="7.8" y="0" width="1.4" height="1.8" fill="#333"/><g fill="#333"><rect x="2.3" y="6.8" width="1.1" height="2.8"/><rect x="4.3" y="5.3" width="1.1" height="4.3"/><rect x="6.3" y="5.3" width="1.1" height="4.3"/><rect x="8.1" y="4.6" width="0.9" height="2"/></g></g><g transform="translate(925.6,495.8)"><rect x="0" y="1.1" width="10.6" height="9.6" rx="0.8" fill="#333"/><rect x="1.1" y="3.6" width="8.4" height="6" fill="#f0f0f0"/><rect x="1.4" y="0" width="1.4" height="1.8" fill="#333"/><rect x="7.8" y="0" width="1.4" height="1.8" fill="#333"/><g fill="#333"><rect x="2.3" y="6.8" width="1.1" height="2.8"/><rect x="4.3" y="5.3" width="1.1" height="4.3"/><rect x="6.3" y="5.3" width="1.1" height="4.3"/><rect x="8.1" y="4.6" width="0.9" height="2"/></g></g><g transform="translate(8.3,578.6) scale(1.048780487804878)" fill="none" stroke="#777" stroke-width="1.24"><path d="M4 1.3 H0.8 V7.5 H7 V4.3"/><path d="M3.4 4.9 L7.6 0.7 M5 0.6 H7.7 V3.3"/></g><rect x="323.7" y="582.2" width="9.4" height="1.9" fill="#666"/><g transform="translate(386.6,575.9) scale(1.1057692307692308,1.0833333333333333)"><path d="M10.4 0 L2.3 4.6 L5.8 5.1 L0 10.8 L8.4 6.5 L5 6 Z" fill="#666" stroke="#666" stroke-width="0.5" stroke-linejoin="round"/><path d="M0.3 0.3 L2.4 2.6 M8.1 8.4 L10.2 10.6" stroke="#666" stroke-width="1.1" stroke-linecap="round"/></g><path d="M876.5 579.5 Q872.8 580.2 873.3 584 Q873.8 586.8 876.8 586.6 L876.6 589.2 L878.2 589.2 L878.2 586.2 Q882 585 881.6 581.8 Q881 579 876.5 579.5 Z M876.8 581 L876.8 584.8 L878 584.8 L878 581 Z" fill="#fff" fill-rule="evenodd"/></svg>
</body></html>
